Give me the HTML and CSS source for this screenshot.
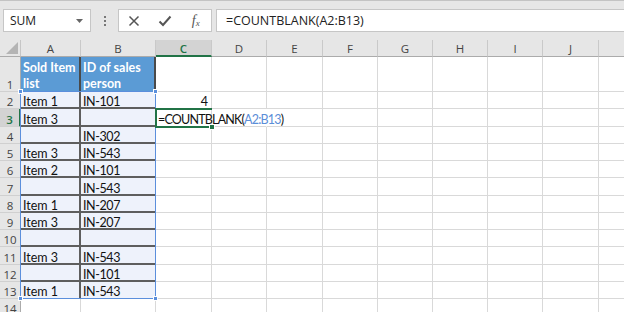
FILE: index.html
```
<!DOCTYPE html>
<html>
<head>
<meta charset="utf-8">
<link rel="stylesheet" href="styles.css">
</head>
<body>
<div class="toolbar">
  <div class="namebox"><span class="nb-text">SUM</span><svg class="caret" width="7" height="4" viewBox="0 0 7 4"><path d="M0 0h7L3.5 4z" fill="#666"/></svg></div>
  <div class="grip"><i></i><i></i><i></i></div>
  <div class="fnbox">
    <span class="btn"><svg width="12" height="12" viewBox="0 0 12 12"><path d="M1.5 1.5l9 9M10.5 1.5l-9 9" stroke="#555" stroke-width="1.5" fill="none"/></svg></span>
    <span class="btn"><svg width="14" height="12" viewBox="0 0 14 12"><path d="M1.5 6.5l3.5 3.5 7.5-8.5" stroke="#555" stroke-width="2" fill="none"/></svg></span>
    <span class="btn fx"><i>f</i><sub>x</sub></span>
  </div>
  <div class="formula">=COUNTBLANK(A2:B13)</div>
</div>
<div class="wrap">
<div class="sheet">
  <div class="corner"><svg width="12" height="12" viewBox="0 0 12 12"><path d="M12 0V12H0z" fill="#b4b4b4"/></svg></div>
  <div class="ch">A</div><div class="ch">B</div><div class="ch sel">C</div><div class="ch">D</div><div class="ch">E</div><div class="ch">F</div><div class="ch">G</div><div class="ch">H</div><div class="ch">I</div><div class="ch">J</div><div class="ch">K</div>

  <div class="rh">1</div><div class="c h">Sold Item<br>list</div><div class="c h">ID of sales<br>person</div><div class="c"></div><div class="c"></div><div class="c"></div><div class="c"></div><div class="c"></div><div class="c"></div><div class="c"></div><div class="c"></div><div class="c"></div>

  <div class="rh">2</div><div class="c d">Item 1</div><div class="c d b">IN-101</div><div class="c num">4</div><div class="c"></div><div class="c"></div><div class="c"></div><div class="c"></div><div class="c"></div><div class="c"></div><div class="c"></div><div class="c"></div>

  <div class="rh sel">3</div><div class="c d">Item 3</div><div class="c d b"></div><div class="c edit">=COUNTBLANK(<span class="ref">A2:B13</span>)</div><div class="c nor"></div><div class="c"></div><div class="c"></div><div class="c"></div><div class="c"></div><div class="c"></div><div class="c"></div><div class="c"></div>

  <div class="rh">4</div><div class="c d"></div><div class="c d b">IN-302</div><div class="c"></div><div class="c"></div><div class="c"></div><div class="c"></div><div class="c"></div><div class="c"></div><div class="c"></div><div class="c"></div><div class="c"></div>

  <div class="rh">5</div><div class="c d">Item 3</div><div class="c d b">IN-543</div><div class="c"></div><div class="c"></div><div class="c"></div><div class="c"></div><div class="c"></div><div class="c"></div><div class="c"></div><div class="c"></div><div class="c"></div>

  <div class="rh">6</div><div class="c d">Item 2</div><div class="c d b">IN-101</div><div class="c"></div><div class="c"></div><div class="c"></div><div class="c"></div><div class="c"></div><div class="c"></div><div class="c"></div><div class="c"></div><div class="c"></div>

  <div class="rh">7</div><div class="c d"></div><div class="c d b">IN-543</div><div class="c"></div><div class="c"></div><div class="c"></div><div class="c"></div><div class="c"></div><div class="c"></div><div class="c"></div><div class="c"></div><div class="c"></div>

  <div class="rh">8</div><div class="c d">Item 1</div><div class="c d b">IN-207</div><div class="c"></div><div class="c"></div><div class="c"></div><div class="c"></div><div class="c"></div><div class="c"></div><div class="c"></div><div class="c"></div><div class="c"></div>

  <div class="rh">9</div><div class="c d">Item 3</div><div class="c d b">IN-207</div><div class="c"></div><div class="c"></div><div class="c"></div><div class="c"></div><div class="c"></div><div class="c"></div><div class="c"></div><div class="c"></div><div class="c"></div>

  <div class="rh">10</div><div class="c d"></div><div class="c d b"></div><div class="c"></div><div class="c"></div><div class="c"></div><div class="c"></div><div class="c"></div><div class="c"></div><div class="c"></div><div class="c"></div><div class="c"></div>

  <div class="rh">11</div><div class="c d">Item 3</div><div class="c d b">IN-543</div><div class="c"></div><div class="c"></div><div class="c"></div><div class="c"></div><div class="c"></div><div class="c"></div><div class="c"></div><div class="c"></div><div class="c"></div>

  <div class="rh">12</div><div class="c d"></div><div class="c d b">IN-101</div><div class="c"></div><div class="c"></div><div class="c"></div><div class="c"></div><div class="c"></div><div class="c"></div><div class="c"></div><div class="c"></div><div class="c"></div>

  <div class="rh">13</div><div class="c d last">Item 1</div><div class="c d b last">IN-543</div><div class="c"></div><div class="c"></div><div class="c"></div><div class="c"></div><div class="c"></div><div class="c"></div><div class="c"></div><div class="c"></div><div class="c"></div>

  <div class="rh">14</div><div class="c"></div><div class="c"></div><div class="c"></div><div class="c"></div><div class="c"></div><div class="c"></div><div class="c"></div><div class="c"></div><div class="c"></div><div class="c"></div><div class="c"></div>
</div>
<div class="overlay">
  <div class="range"><i class="hd tl"></i><i class="hd tr"></i><i class="hd bl"></i><i class="hd br"></i></div>
  <div class="active"><i class="fill"></i></div>
</div>
</div>
</body>
</html>
```

FILE: styles.css
```
html, body {
  margin: 0;
  padding: 0;
  background: #ffffff;
  overflow: hidden;
}
body {
  width: 624px;
  height: 312px;
  font-family: Lato, "Noto Sans", sans-serif;
}
.toolbar {
  height: 40px;
  box-sizing: border-box;
  background: #e6e6e6;
  border-top: 1px solid #c3c3c3;
  display: flex;
  align-items: center;
  padding-left: 3px;
}
.namebox {
  width: 88px;
  height: 23px;
  box-sizing: border-box;
  background: #fff;
  border: 1px solid #c6c6c6;
  display: flex;
  align-items: center;
  justify-content: space-between;
  padding: 0 7px 0 6px;
  font-family: "Open Sans", sans-serif;
  font-size: 12px;
  color: #222;
}
.grip {
  width: 27px;
  display: flex;
  flex-direction: column;
  align-items: center;
  gap: 2px;
}
.grip i {
  width: 2px;
  height: 2px;
  background: #777;
  display: block;
}
.fnbox {
  width: 94px;
  height: 23px;
  box-sizing: border-box;
  background: #fff;
  border: 1px solid #c6c6c6;
  display: flex;
  align-items: center;
}
.btn {
  width: 31px;
  display: flex;
  justify-content: center;
  align-items: center;
}
.fx {
  font-family: "Liberation Serif", serif;
  font-size: 14px;
  color: #555;
  display: block;
  text-align: center;
}
.fx sub {
  font-size: 9px;
  font-style: italic;
  vertical-align: -1px;
}
.formula {
  flex: 1;
  margin-left: 4px;
  height: 23px;
  box-sizing: border-box;
  background: #fff;
  border: 1px solid #c6c6c6;
  border-right: none;
  display: flex;
  align-items: center;
  padding-left: 9px;
  font-family: "Open Sans", sans-serif;
  font-size: 12.5px;
  color: #222;
}
.wrap {
  display: grid;
}
.sheet,
.overlay {
  grid-area: 1 / 1;
  display: grid;
  grid-template-columns: 21px 60px 75px 56px 55px 56px 55px 55px 55px 55px 56px 60px;
  grid-template-rows: 17px 35px repeat(13, 17.25px);
}
.overlay {
  z-index: 5;
  pointer-events: none;
}
.corner {
  background: #e6e6e6;
  border-right: 1px solid #c6c6c6;
  border-bottom: 1px solid #ababab;
  box-sizing: border-box;
  display: flex;
  align-items: flex-end;
  justify-content: flex-end;
  padding: 0 2px 2px 0;
}
.ch {
  background: #e6e6e6;
  border-right: 1px solid #c9c9c9;
  border-bottom: 1px solid #ababab;
  box-sizing: border-box;
  display: flex;
  align-items: center;
  justify-content: center;
  font-family: "Open Sans", sans-serif;
  font-size: 11.5px;
  color: #444;
  padding-top: 1px;
}
.ch.sel {
  background: #d3d3d3;
  color: #217346;
  font-weight: 600;
  border-bottom: 2px solid #217346;
}
.rh {
  background: #e6e6e6;
  border-right: 1px solid #ababab;
  border-bottom: 1px solid #d0d0d0;
  box-sizing: border-box;
  display: flex;
  align-items: flex-end;
  justify-content: center;
  font-family: "Open Sans", sans-serif;
  font-size: 11.5px;
  color: #444;
  line-height: 13px;
}
.rh.sel {
  background: #d3d3d3;
  color: #217346;
  font-weight: 600;
  border-right: 2px solid #217346;
}
.c {
  border-right: 1px solid #d9d9d9;
  border-bottom: 1px solid #d9d9d9;
  box-sizing: border-box;
  display: flex;
  align-items: flex-end;
  padding: 0 2px;
  font-size: 12.5px;
  line-height: 13px;
  color: #111;
  white-space: nowrap;
  min-width: 0;
}
.c.h {
  background: #5b9bd5;
  color: #fff;
  font-weight: bold;
  border-right: none;
  border-bottom: none;
  box-shadow: inset -2px 0 #4a4a4a;
  line-height: 16px;
  align-items: flex-start;
  padding-top: 3px;
}
.c.d {
  background: #eef2fb;
  border-right: none;
  border-bottom: none;
  box-shadow: inset -2px -2px #5e5e5e;
  padding-bottom: 1px;
}
.c.d.b {
  letter-spacing: -0.4px;
  box-shadow: inset 0 -2px #5e5e5e;
}
.c.d.last {
  box-shadow: inset -2px 0 #5e5e5e;
}
.c.d.b.last {
  box-shadow: none;
}
.c.num {
  justify-content: flex-end;
  padding-right: 3px;
}
.c.edit {
  overflow: visible;
  position: relative;
  z-index: 3;
  padding-left: 2px;
  letter-spacing: -0.8px;
}
.c.nor {
  border-right-color: transparent;
}
.ref {
  color: #5b8ed8;
}
.range {
  grid-column: 2 / 4;
  grid-row: 3 / 15;
  border: 1px solid #5b8fdc;
  margin: -1px 0 0 -1px;
  position: relative;
}
.hd {
  position: absolute;
  width: 5px;
  height: 5px;
  background: #5b8fdc;
  border: 1px solid #fff;
  box-sizing: border-box;
}
.hd.tl { left: -3px; top: -3px; }
.hd.tr { right: -3px; top: -3px; }
.hd.bl { left: -3px; bottom: -3px; }
.hd.br { right: -3px; bottom: -3px; }
.active {
  grid-column: 4 / 5;
  grid-row: 4 / 5;
  border: 2px solid #217346;
  border-right: none;
  margin: -1px 0 -1px -1px;
  position: relative;
}
.fill {
  position: absolute;
  right: -3px;
  bottom: -4px;
  width: 6px;
  height: 6px;
  background: #217346;
  border: 1px solid #fff;
  box-sizing: border-box;
}
```
